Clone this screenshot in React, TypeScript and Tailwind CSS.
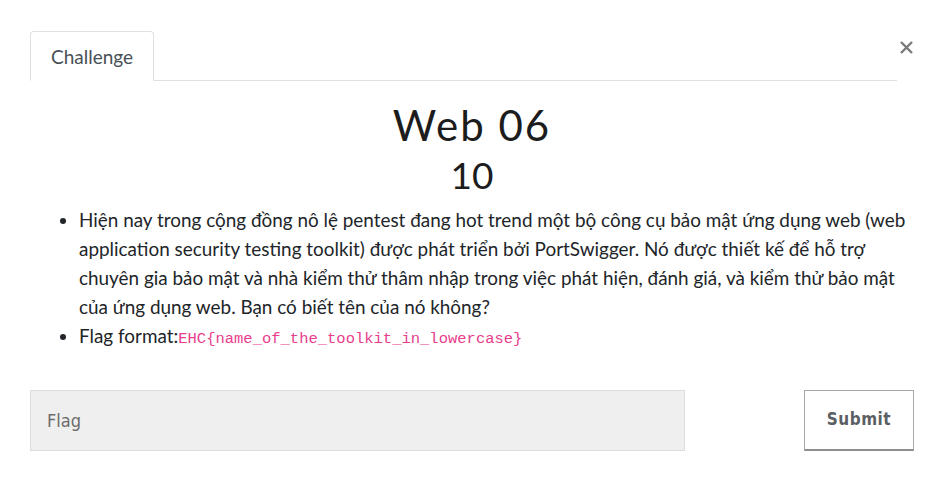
import React from "react";

const App: React.FC = () => {
  return (
    <div className="min-h-[497px] w-[940px] bg-white pl-[30px] pr-[26px] pt-[31px] font-['Lato',sans-serif] text-[#212529]">
      <div className="flex items-start">
        <div className="flex flex-1 border-b border-[#dee2e6]">
          <div className="-mb-px flex h-[50px] items-center rounded-t border border-[#dee2e6] border-b-white bg-white px-[20px] pt-[2px] text-[19px] text-[#495057]">
            Challenge
          </div>
        </div>
        <button className="ml-[1px] mt-[8px] flex h-[16px] w-[16px] items-center justify-center text-[#7a7a7a]">
          <svg width="15" height="15" viewBox="0 0 15 15">
            <path d="M2 2 L13 13 M13 2 L2 13" stroke="currentColor" strokeWidth="2.4" />
          </svg>
        </button>
      </div>

      <h3 className="mt-[20px] text-center font-['Lato',sans-serif] text-[42px] font-normal leading-[48px] tracking-[2px] text-[#1c1c1c]">
        Web 06
      </h3>
      <h4 className="mt-[4px] text-center font-['Lato',sans-serif] text-[37px] font-normal leading-[44px] text-[#1c1c1c]">
        10
      </h4>

      <ul className="mt-[8px] list-disc pl-[49px] text-[18.9px] leading-[29px] text-[#212529]">
        <li>
          Hiện nay trong cộng đồng nô lệ pentest đang hot trend một bộ công cụ bảo mật ứng dụng web (web
          application security testing toolkit) được phát triển bởi PortSwigger. Nó được thiết kế để hỗ trợ
          chuyên gia bảo mật và nhà kiểm thử thâm nhập trong việc phát hiện, đánh giá, và kiểm thử bảo mật
          của ứng dụng web. Bạn có biết tên của nó không?
        </li>
        <li>
          Flag format:
          <code className="font-['Liberation_Mono',monospace] text-[15.5px] text-[#e83e8c]">
            EHC{"{"}name_of_the_toolkit_in_lowercase{"}"}
          </code>
        </li>
      </ul>

      <div className="mt-[36px] flex items-center justify-between">
        <input
          type="text"
          placeholder="Flag"
          className="h-[61px] w-[655px] border border-[#dcdcdc] bg-[#efefef] px-[16px] font-['DejaVu_Sans_Condensed','DejaVu_Sans',sans-serif] text-[18px] text-[#495057] placeholder:text-[#6c6c6c] outline-none"
        />
        <button className="h-[61px] w-[110px] border border-[#a8a8a8] border-b-2 border-b-[#8f8f8f] bg-white font-['DejaVu_Sans_Condensed','DejaVu_Sans',sans-serif] text-[17px] font-bold tracking-[0.5px] text-[#5b5f63]">
          Submit
        </button>
      </div>
    </div>
  );
};

export default App;
